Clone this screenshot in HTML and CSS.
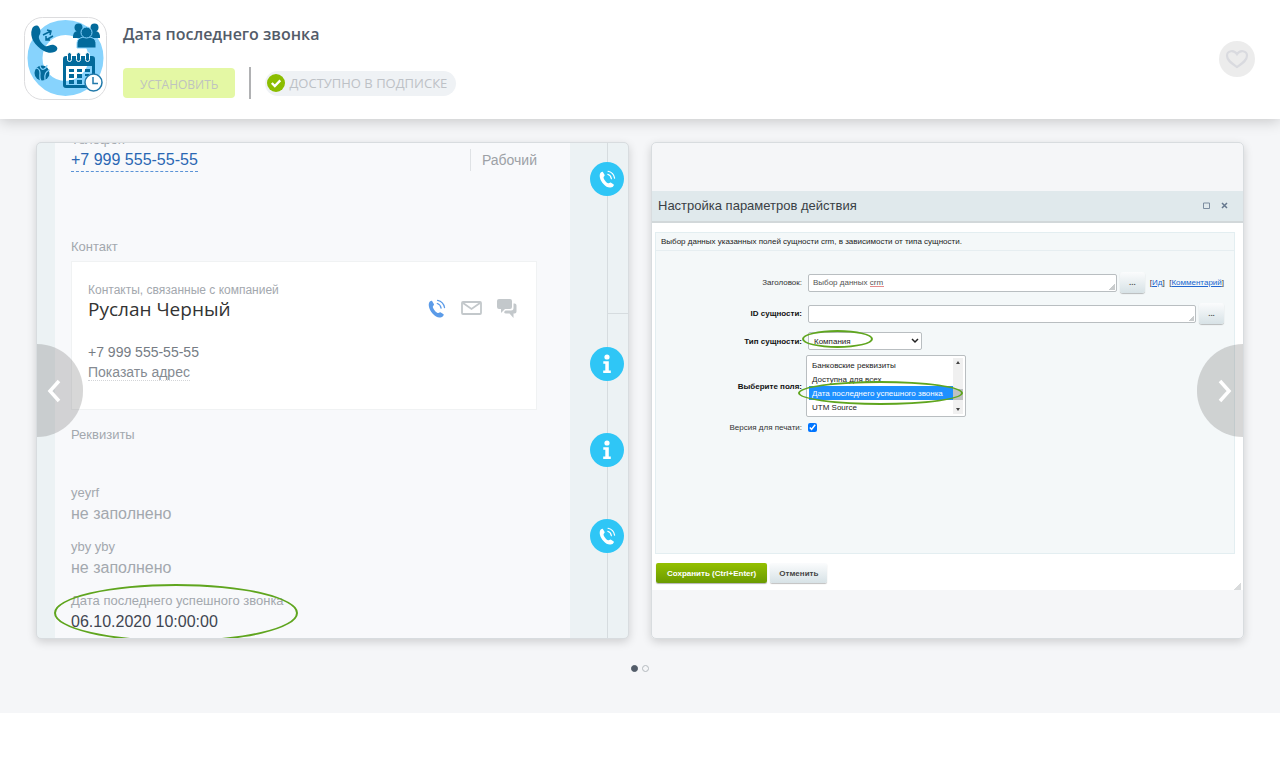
FILE: index.html
```html
<!DOCTYPE html>
<html lang="ru">
<head>
<meta charset="utf-8">
<title>Дата последнего звонка</title>
<link rel="stylesheet" href="styles.css">
</head>
<body>
<svg class="sprite" aria-hidden="true">
  <symbol id="call" viewBox="0 0 18 19">
    <path fill="currentColor" d="M1.2 3.6C1.9 2.3 3.3 1.4 4.1 2l1.9 3.2c.4.8-1.2 1.7-1.2 2.6 0 1.700 3 5.700 4.800 6.200.9.2 2-1.200 2.800-.8l3.200 2c.7.6-.8 2.700-2.200 3.100C10.500 19 7.700 18.400 4.500 14.600 1.200 10.900 0 6.100 1.200 3.600z"/>
    <path fill="none" stroke="currentColor" stroke-width="1.300" stroke-linecap="round" d="M9.300 4.500c2 .7 3.500 2.500 3.800 4.700M9.600 1.300c3.600.8 6.300 3.700 6.900 7.200"/>
  </symbol>
  <symbol id="info" viewBox="0 0 10 20">
    <circle cx="5" cy="3" r="2.600" fill="currentColor"/>
    <path fill="currentColor" d="M1.300 7.200h5.500v9.300h2V19H1.200v-2.500h2.100V9.700h-2z"/>
  </symbol>
</svg>

<header class="app-head">
  <svg class="logo" viewBox="0 0 83 83" role="img" aria-label="Логотип приложения">
    <rect x=".5" y=".5" width="82" height="82" rx="18" fill="#fff" stroke="#dcdcde"/>
    <circle cx="41.500" cy="41" r="30.500" fill="none" stroke="#87d3fd" stroke-width="15"/>
    <g fill="#036a9b">
      <path d="M8 12c1-3 5-5 7-2 2 3 2 6 0 9-1 3 3 8 6 10 3 1 5-2 9-1 3 1 4 3 3 5-2 3-8 4-13 1C11 29 5 20 8 12z"/>
      <circle cx="54.500" cy="10.500" r="4"/><circle cx="70.500" cy="10.500" r="4"/>
      <path d="M49 20c0-4 2-6 5-6h17c3 0 5 2 5 6v1H49z"/>
      <path stroke="#87d3fd" stroke-width="1" d="M53 27c0-5 3-7 9.500-7s9.500 2 9.500 7v4H53z"/>
      <circle cx="62.500" cy="15.500" r="5.500" stroke="#87d3fd" stroke-width="1"/>
      <path fill-rule="evenodd" d="M42 39h26c2 0 3 1 3 3v26c0 2-1 3-3 3H42c-2 0-3-1-3-3V42c0-2 1-3 3-3zm0 10v19h26V49z"/>
      <g stroke="#fff" stroke-width="1"><rect x="43.500" y="35.500" width="4" height="9" rx="2"/><rect x="52.500" y="35.500" width="4" height="9" rx="2"/><rect x="61.500" y="35.500" width="4" height="9" rx="2"/></g>
      <path d="M45 52h5v3h-5zM53 52h5v3h-5zM61 52h5v3h-5zM45 57h5v4h-5zM53 57h5v4h-5zM61 57h4v2h-4zM45 63h5v4h-5zM53 63h5v4h-5z"/>
      <circle cx="18" cy="56" r="7.500"/>
    </g>
    <path d="M11 51c3 0 5 2 5 5s-1 5 1 8M16 48c0 3 2 5 4 4s3-2 3-4M26 53c-4 1-6 4-5 10" fill="none" stroke="#87d3fd" stroke-width="1.200"/>
    <path d="M19 18l8-4m-4-1l4 1-1 4M29 19l-7 4m0-4v4h4" fill="none" stroke="#036a9b" stroke-width="1.500"/>
    <circle cx="69.500" cy="65.500" r="8.500" fill="#fff" stroke="#227aab" stroke-width="1.500"/>
    <path d="M69 60v6.500h5" fill="none" stroke="#227aab" stroke-width="1.500"/>
  </svg>
  <div class="app-info">
    <h1 class="app-title">Дата последнего звонка</h1>
    <div class="app-actions">
      <button class="install" type="button">Установить</button>
      <span class="divider"></span>
      <span class="subscription">
        <svg class="check" viewBox="0 0 18 18" aria-hidden="true"><circle cx="9" cy="9" r="9" fill="#8bbd00"/><path d="M4.800 9l3 3 5.500-5.600" fill="none" stroke="#fff" stroke-width="2.400"/></svg>
        Доступно в подписке
      </span>
    </div>
  </div>
  <button class="favorite" type="button" aria-label="В избранное">
    <svg class="heart" viewBox="0 0 24 20" aria-hidden="true"><path d="M12 18C7 14.500 2 11.500 2 6.800 2 1.500 9 .5 12 5.200 15 .5 22 1.500 22 6.800c0 4.700-5 7.700-10 11.200z" fill="none" stroke="#d9dadf" stroke-width="2.200"/></svg>
  </button>
</header>

<main class="gallery">
  <div class="slides">
    <section class="slide contact">
      <div class="contact-main">
        <p class="label first">Телефон</p>
        <div class="phone-row">
          <a class="phone" href="#">+7 999 555-55-55</a>
          <span class="phone-type">Рабочий</span>
        </div>
        <p class="label contact-label">Контакт</p>
        <div class="person">
          <div class="person-text">
            <p class="label person-label">Контакты, связанные с компанией</p>
            <p class="person-name">Руслан Черный</p>
            <p class="person-phone">+7 999 555-55-55</p>
            <a class="address" href="#">Показать адрес</a>
          </div>
          <div class="person-icons">
            <svg class="icon-call" aria-hidden="true"><use href="#call"/></svg>
            <svg class="icon-mail" viewBox="0 0 21 14" aria-hidden="true"><rect x="1" y="1" width="19" height="12" rx="1" fill="none" stroke="#c3c8cb" stroke-width="1.800"/><path d="M2 2l8.500 6L19 2" fill="none" stroke="#c3c8cb" stroke-width="1.800"/></svg>
            <svg class="icon-chat" viewBox="0 0 20 19" aria-hidden="true"><path fill="#c3c8cb" d="M2 0h11q2 0 2 2v6q0 2-2 2H8l-4 4v-4H2Q0 10 0 8V2Q0 0 2 0zM16.500 4.500h1q2 0 2 2v6q0 2-2 2h-1V19l-4-4.500H9q-1.500 0-2-1.500l1.500-1.500H14q2.500 0 2.500-2.500z"/></svg>
          </div>
        </div>
        <p class="label details-label">Реквизиты</p>
        <div class="field spaced">
          <p class="label">yeyrf</p>
          <p class="value empty">не заполнено</p>
        </div>
        <div class="field">
          <p class="label">yby yby</p>
          <p class="value empty">не заполнено</p>
        </div>
        <div class="field">
          <p class="label">Дата последнего успешного звонка</p>
          <p class="value">06.10.2020 10:00:00</p>
          <span class="mark mark-date"></span>
        </div>
      </div>
      <div class="timeline">
        <span class="event event-first"><svg class="event-call" aria-hidden="true"><use href="#call"/></svg></span>
        <span class="branch"></span>
        <span class="event"><svg class="event-info" aria-hidden="true"><use href="#info"/></svg></span>
        <span class="event"><svg class="event-info" aria-hidden="true"><use href="#info"/></svg></span>
        <span class="event"><svg class="event-call" aria-hidden="true"><use href="#call"/></svg></span>
      </div>
      <button class="arrow prev" type="button" aria-label="Назад"><svg class="chevron" viewBox="0 0 14 24" aria-hidden="true"><path d="M12 2L3 12l9 10" fill="none" stroke="#fff" stroke-width="3.500"/></svg></button>
    </section>

    <section class="slide settings">
      <div class="dialog">
        <div class="dialog-head">
          <h2 class="dialog-title">Настройка параметров действия</h2>
          <button class="win" type="button" aria-label="Развернуть"><svg class="win-icon" viewBox="0 0 7 7"><path d="M.5 1h6v5.500h-6z" fill="none" stroke="#7d8da0"/></svg></button>
          <button class="win" type="button" aria-label="Закрыть"><svg class="win-icon" viewBox="0 0 7 7"><path d="M1 1l5 5M6 1L1 6" fill="none" stroke="#66788e" stroke-width="1.500"/></svg></button>
        </div>
        <form class="dialog-body">
          <div class="panel">
            <p class="panel-note">Выбор данных указанных полей сущности crm, в зависимости от типа сущности.</p>
            <div class="rows">
              <div class="row">
                <label class="row-label" for="title">Заголовок:</label>
                <div class="row-field title-field">
                  <textarea class="area" id="title" rows="1" spellcheck="false">Выбор данных crm</textarea>
                  <button class="more" type="button">...</button>
                  <span class="links">[<a class="link" href="#">Ид</a>]&nbsp; [<a class="link" href="#">Комментарий</a>]</span>
                </div>
              </div>
              <div class="row">
                <label class="row-label strong" for="entity">ID сущности:</label>
                <div class="row-field">
                  <textarea class="area" id="entity" rows="1"></textarea>
                  <button class="more" type="button">...</button>
                </div>
              </div>
              <div class="row row-type">
                <label class="row-label strong" for="type">Тип сущности:</label>
                <div class="row-field">
                  <div class="type-wrap">
                    <select class="type" id="type"><option>Компания</option></select>
                    <svg class="caret" viewBox="0 0 8 6" aria-hidden="true"><path d="M1 1l3 3 3-3" fill="none" stroke="#222" stroke-width="1.500"/></svg>
                    <span class="mark mark-type"></span>
                  </div>
                </div>
              </div>
              <div class="row row-list">
                <label class="row-label strong" for="fields">Выберите поля:</label>
                <div class="row-field">
                  <div class="list">
                    <select class="list-box" id="fields" size="4">
                      <option class="item">Банковские реквизиты</option>
                      <option class="item">Доступна для всех</option>
                      <option class="item" selected>Дата последнего успешного звонка</option>
                      <option class="item">UTM Source</option>
                    </select>
                    <span class="scroll"><i class="up"></i><i class="thumb"></i><i class="down"></i></span>
                    <span class="mark mark-item"></span>
                  </div>
                </div>
              </div>
              <div class="row row-check">
                <label class="row-label" for="print">Версия для печати:</label>
                <div class="row-field"><input class="tick" id="print" type="checkbox" checked></div>
              </div>
            </div>
          </div>
          <div class="dialog-foot">
            <button class="save" type="button">Сохранить (Ctrl+Enter)</button>
            <button class="cancel" type="button">Отменить</button>
            <span class="grip"></span>
          </div>
        </form>
      </div>
      <button class="arrow next" type="button" aria-label="Вперёд"><svg class="chevron" viewBox="0 0 14 24" aria-hidden="true"><path d="M2 2l9 10-9 10" fill="none" stroke="#fff" stroke-width="3.500"/></svg></button>
    </section>
  </div>
  <div class="dots">
    <button class="dot active" type="button" aria-label="Слайд 1"></button>
    <button class="dot" type="button" aria-label="Слайд 2"></button>
  </div>
</main>
</body>
</html>
```

FILE: styles.css
```css
* { box-sizing: border-box; }
body { margin: 0; background: #fff; font-family: "Liberation Sans", Arial, sans-serif; color: #333; }
h1, h2, p { margin: 0; }
button, select, textarea { font-family: inherit; }
button { border: 0; padding: 0; cursor: pointer; }
.sprite { display: none; }

/* Header */
.app-head { position: relative; display: flex; align-items: flex-start; gap: 16px; padding: 17px 25px 19px 24px; background: #fff; box-shadow: 0 2px 14px rgba(0, 0, 0, .2); font-family: "Open Sans", sans-serif; }
.logo { width: 83px; height: 83px; flex: none; }
.app-info { flex: 1; padding-top: 6px; }
.app-title { font-size: 16px; line-height: 22px; font-weight: 600; color: #535c69; }
.app-actions { display: flex; align-items: center; gap: 14px; margin-top: 22px; }
.install { height: 30px; padding: 2px 17px 0; border-radius: 4px; background: #e4f8a4; color: #bfc3c0; font-family: inherit; font-size: 12px; text-transform: uppercase; }
.divider { width: 2px; height: 32px; background: #b0b1b3; }
.subscription { display: flex; align-items: center; gap: 4px; height: 25px; padding: 0 9px 0 2px; border-radius: 13px; background: #eff2f5; color: #bdc1c6; font-size: 13px; text-transform: uppercase; }
.check { width: 18px; height: 18px; }
.favorite { display: flex; align-items: center; justify-content: center; width: 36px; height: 36px; margin-top: 24px; border-radius: 50%; background: #ececec; }
.heart { width: 24px; height: 20px; }

/* Gallery */
.gallery { padding: 23px 36px 41px; background: #f5f6f8; }
.slides { display: grid; grid-template-columns: 1fr 1fr; gap: 22px; }
.slide { position: relative; overflow: hidden; border: 1px solid #d8dcdf; border-radius: 5px; box-shadow: 0 3px 10px rgba(0, 0, 0, .16); }
.arrow { position: absolute; top: 201px; display: flex; align-items: center; width: 46px; height: 93px; background: rgba(95, 95, 95, .25); }
.prev { left: 0; padding-left: 10px; border-radius: 0 47px 47px 0; }
.next { right: 0; padding-left: 21px; border-radius: 47px 0 0 47px; }
.chevron { width: 14px; height: 24px; }
.dots { display: flex; justify-content: center; gap: 4px; margin-top: 26px; }
.dot { width: 7px; height: 7px; border: 1px solid #b4babf; border-radius: 50%; background: transparent; }
.dot.active { background: #525c69; border-color: #525c69; }

/* Contact slide */
.contact { display: flex; padding-left: 18px; background: #ecf2f4; }
.contact-main { flex: 1; padding: 0 33px 3px 16px; background: #f8f9fb; }
.label { font-size: 13px; line-height: 16px; color: #a3a8ae; }
.first { margin-top: -11px; }
.phone-row { display: flex; justify-content: space-between; align-items: flex-start; margin-top: 1px; }
.phone { border-bottom: 1px dashed #5b93d6; font-size: 16px; line-height: 22px; color: #2a67b3; text-decoration: none; }
.phone-type { padding-left: 11px; border-left: 1px solid #dfe2e5; font-size: 14px; line-height: 22px; color: #9da1a6; }
.contact-label { margin-top: 67px; }
.person { display: flex; justify-content: space-between; margin-top: 6px; padding: 20px 19px 27px 16px; background: #fff; border: 1px solid #f0f2f3; }
.person-label { font-size: 12px; }
.person-name { font-family: "Open Sans", sans-serif; font-size: 19px; line-height: 22px; color: #333; }
.person-phone { margin-top: 22px; font-size: 14px; line-height: 20px; color: #767c84; }
.address { border-bottom: 1px dotted #d3d5d8; font-size: 14px; line-height: 20px; color: #858b92; text-decoration: none; }
.person-icons { display: flex; align-items: center; gap: 15px; height: 52px; }
.icon-call { width: 18px; height: 19px; color: #5b9be8; }
.icon-mail { width: 21px; height: 14px; }
.icon-chat { width: 20px; height: 19px; }
.details-label { margin-top: 17px; }
.field { position: relative; margin-top: 12px; }
.spaced { margin-top: 42px; }
.value { font-size: 16px; line-height: 26px; color: #3f4550; }
.empty { color: #a3a8ae; }
.mark { position: absolute; border: 2px solid #5fa51e; border-radius: 50%; pointer-events: none; }
.mark-date { left: -17px; top: -9px; width: 244px; height: 58px; }

.timeline { display: flex; flex-direction: column; gap: 52px; width: 58px; padding-left: 20px; background: linear-gradient(#d6dcdf, #d6dcdf) 37px 0 / 1px 100% no-repeat; }
.event { display: flex; align-items: center; justify-content: center; width: 34px; height: 34px; border-radius: 50%; background: #2fc6f6; color: #fff; }
.event-first { margin-top: 19px; }
.event-call { width: 17px; height: 18px; }
.event-info { width: 10px; height: 20px; }
.branch { height: 1px; margin: 65px 0 -19px 18px; background: #d6dcdf; }

/* Settings slide */
.settings { display: flex; flex-direction: column; justify-content: center; }
.dialog { background: #fff; font-size: 8px; color: #333; }
.dialog-head { display: flex; align-items: center; gap: 11px; height: 32px; padding: 0 15px 1px 6px; background: #e0e9ec; border-bottom: 2px solid #d2d8da; }
.dialog-title { flex: 1; font-size: 13px; line-height: 18px; font-weight: 400; color: #3a3f45; }
.win { display: flex; background: none; }
.win-icon { width: 7px; height: 7px; }
.dialog-body { padding: 9px 8px 0 3px; }
.panel { min-height: 322px; background: #f4f8f9; border: 1px solid #e3eef1; }
.panel-note { padding: 0 5px; border-bottom: 1px solid #e6eef1; font-size: 8px; line-height: 17px; color: #222; }
.rows { display: grid; padding: 21px 10px 0 0; gap: 10px; }
.row { display: grid; grid-template-columns: 146px 1fr; column-gap: 6px; align-items: center; }
.row-label { text-align: right; font-size: 8px; }
.strong { font-weight: 700; color: #111; }
.row-field { display: flex; align-items: center; gap: 3px; }
.title-field { position: relative; }
.title-field::after { content: ""; position: absolute; left: 62px; top: 14px; width: 14px; border-top: 1px solid #e58a8a; }
.area { flex: 1; min-width: 0; height: 18px; padding: 3px 4px; border: 1px solid #b9bec1; border-radius: 2px; background: #fff linear-gradient(135deg, transparent 50%, #c9cccd 50%) right 1px bottom 1px / 6px 6px no-repeat; color: #555; font-size: 8px; line-height: 10px; overflow: hidden; resize: none; }
.more { width: 25px; height: 21px; border-radius: 3px; background: linear-gradient(#fbfcfd, #d7e2e6); box-shadow: 0 1px 1px rgba(0, 0, 0, .25); font-size: 8px; font-weight: 700; color: #555; }
.links { padding-left: 2px; font-size: 8px; white-space: pre; color: #433; }
.link { color: #2067d0; }
.type-wrap { position: relative; display: flex; align-items: center; width: 114px; }
.type { appearance: none; width: 100%; height: 18px; padding: 0 5px; border: 1px solid #b9bec1; border-radius: 2px; background: #fff; color: #222; font-size: 8px; }
.caret { position: absolute; right: 3px; width: 8px; height: 6px; }
.mark-type { left: -6px; top: -2px; width: 71px; height: 18px; }
.row-type { margin-top: -2px; }
.row-list { margin-top: -5px; }
.list { position: relative; display: flex; width: 160px; height: 62px; margin-left: -2px; padding: 2px; background: #fff; border: 1px solid #b9bec1; border-radius: 2px; }
.list-box { flex: 1; min-width: 0; height: 56px; padding: 0; border: 0; outline: 0; background: #fff; font-size: 8px; overflow: hidden; }
.item { min-height: 14px; padding: 3px 3px 0; font-size: 8px; line-height: 11px; color: #222; }
.item:checked { background: #1e90ff linear-gradient(#1e90ff, #1e90ff); color: #fff; }
.scroll { display: flex; flex-direction: column; align-items: center; width: 10px; padding: 3px 0; background: #f0f0f0; }
.up, .down { border: 2px solid transparent; }
.up { border-bottom: 3px solid #444; border-top: 0; }
.down { border-top: 3px solid #444; border-bottom: 0; }
.thumb { width: 100%; height: 11px; margin: auto 0 8px; background: #bfc1c2; }
.mark-item { left: -9px; top: 25px; width: 165px; height: 24px; }
.row-check { margin-top: -4px; }
.tick { width: 9px; height: 9px; margin: 0; }
.dialog-foot { display: flex; align-items: flex-start; gap: 3px; padding: 9px 0 7px 1px; position: relative; }
.save, .cancel { height: 20px; padding: 0 11px; border-radius: 2px; font-size: 8px; font-weight: 700; }
.save { background: linear-gradient(#94c000, #6b9b00); box-shadow: 0 1px 1px rgba(0, 0, 0, .3); color: #fff; }
.cancel { padding: 0 9px; background: linear-gradient(#fbfcfd, #d7e2e6); box-shadow: 0 1px 1px rgba(0, 0, 0, .25); color: #444; }
.grip { position: absolute; right: -6px; bottom: 0; width: 7px; height: 7px; background: linear-gradient(135deg, transparent 50%, #d9dbdc 50%); }
```
